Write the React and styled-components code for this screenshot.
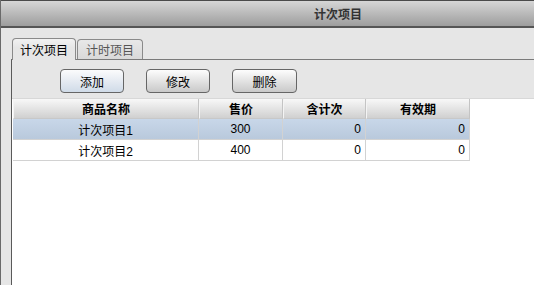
import React from "react";
import styled, { createGlobalStyle, css } from "styled-components";

const Global = createGlobalStyle`
  html, body { margin: 0; padding: 0; background: #e6e6e6; overflow: hidden; }
  body { font-family: "Liberation Sans", "Noto Sans CJK SC", sans-serif; font-size: 12px; color: #000; }
`;

const Window = styled.div`
  width: 534px;
  height: 285px;
  box-sizing: border-box;
  border-left: 1px solid #6a6a6a;
  display: flex;
  flex-direction: column;
  background: #e6e6e6;
`;

const TitleBar = styled.div`
  height: 25px;
  flex: none;
  border-top: 1px solid #4a4a4a;
  border-bottom: 2px solid #555;
  background: linear-gradient(#d6d6d6, #9d9d9d);
  display: flex;
  align-items: center;
  justify-content: center;
  padding-left: 141px;
  font-weight: bold;
  font-size: 12px;
  color: #333;
`;

const Body = styled.div`
  flex: 1;
  display: flex;
  flex-direction: column;
  padding: 10px 0 0 10px;
  min-height: 0;
`;

const TabStrip = styled.div`
  display: flex;
  align-items: flex-end;
  height: 21px;
  padding-left: 1px;
  gap: 1px;
`;

const Tab = styled.div`
  box-sizing: border-box;
  width: ${(p) => (p.$active ? "64px" : "66px")};
  height: ${(p) => (p.$active ? "22px" : "20px")};
  border: 1px solid #8a8a8a;
  border-radius: 4px 4px 0 0;
  display: flex;
  align-items: center;
  justify-content: center;
  font-size: 12px;
  position: relative;
  ${(p) =>
    p.$active
      ? css`
          border-bottom: none;
          background: linear-gradient(#f2f2f2, #e6e6e6 40%);
          color: #000;
          margin-bottom: -1px;
          z-index: 1;
          padding-bottom: 1px;
        `
      : css`
          background: linear-gradient(#e8e8e8, #d9d9d9);
          color: #555;
          border-bottom: none;
        `}
`;

const Panel = styled.div`
  flex: 1;
  display: flex;
  flex-direction: column;
  border-left: 1px solid #5a5a5a;
  border-top: 1px solid #7a7a7a;
  min-height: 0;
`;

const Toolbar = styled.div`
  display: flex;
  gap: 22px;
  padding: 9px 0 5px 48px;
`;

const Button = styled.button`
  box-sizing: border-box;
  width: ${(p) => p.$w || 64}px;
  height: 24px;
  border: 1px solid #666;
  border-radius: 4px;
  background: ${(p) =>
    p.$focused
      ? "linear-gradient(#fbfbfc, #d0dbe8)"
      : "linear-gradient(#fdfdfd, #c9c9c9)"};
  font-family: "Liberation Sans", "Noto Sans CJK SC", sans-serif;
  font-size: 12px;
  color: #000;
  padding: 0;
  display: flex;
  align-items: center;
  justify-content: center;
`;

const Viewport = styled.div`
  flex: 1;
  background: #fff;
  padding-left: 1px;
  border-top: 1px solid #d8d8d8;
`;

const Grid = styled.div`
  display: grid;
  grid-template-columns: 186px 84px 83px 104px;
  width: 457px;
`;

const HeadCell = styled.div`
  box-sizing: border-box;
  height: 20px;
  display: flex;
  align-items: center;
  justify-content: center;
  font-weight: bold;
  font-size: 12px;
  background: linear-gradient(#f8f8f8, #d0d0d0);
  border-right: 1px solid #c4c4c4;
  border-left: 1px solid #f4f4f4;
  border-bottom: 1px solid #c8c8c8;
`;

const Cell = styled.div`
  box-sizing: border-box;
  height: 21px;
  display: flex;
  align-items: center;
  justify-content: ${(p) => (p.$align === "right" ? "flex-end" : "center")};
  padding: 0 ${(p) => (p.$align === "right" ? "4px" : "0")} 0 0;
  font-size: 12px;
  border-right: 1px solid #d2d2d2;
  border-bottom: 1px solid #d2d2d2;
  background: ${(p) => (p.$selected ? "linear-gradient(#c8d7e9, #b9c9dc)" : "#fff")};
`;

const columns = [
  { title: "商品名称", key: "name", align: "center" },
  { title: "售价", key: "price", align: "center" },
  { title: "含计次", key: "count", align: "right" },
  { title: "有效期", key: "valid", align: "right" },
];

const rows = [
  { name: "计次项目1", price: "300", count: "0", valid: "0" },
  { name: "计次项目2", price: "400", count: "0", valid: "0" },
];

export default function App() {
  return (
    <>
      <Global />
      <Window>
        <TitleBar>计次项目</TitleBar>
        <Body>
          <TabStrip>
            <Tab $active>计次项目</Tab>
            <Tab>计时项目</Tab>
          </TabStrip>
          <Panel>
            <Toolbar>
              <Button $focused>添加</Button>
              <Button>修改</Button>
              <Button $w={65}>删除</Button>
            </Toolbar>
            <Viewport>
              <Grid>
                {columns.map((c) => (
                  <HeadCell key={c.key}>{c.title}</HeadCell>
                ))}
                {rows.map((r, i) =>
                  columns.map((c) => (
                    <Cell key={i + c.key} $align={c.align} $selected={i === 0}>
                      {r[c.key]}
                    </Cell>
                  ))
                )}
              </Grid>
            </Viewport>
          </Panel>
        </Body>
      </Window>
    </>
  );
}
